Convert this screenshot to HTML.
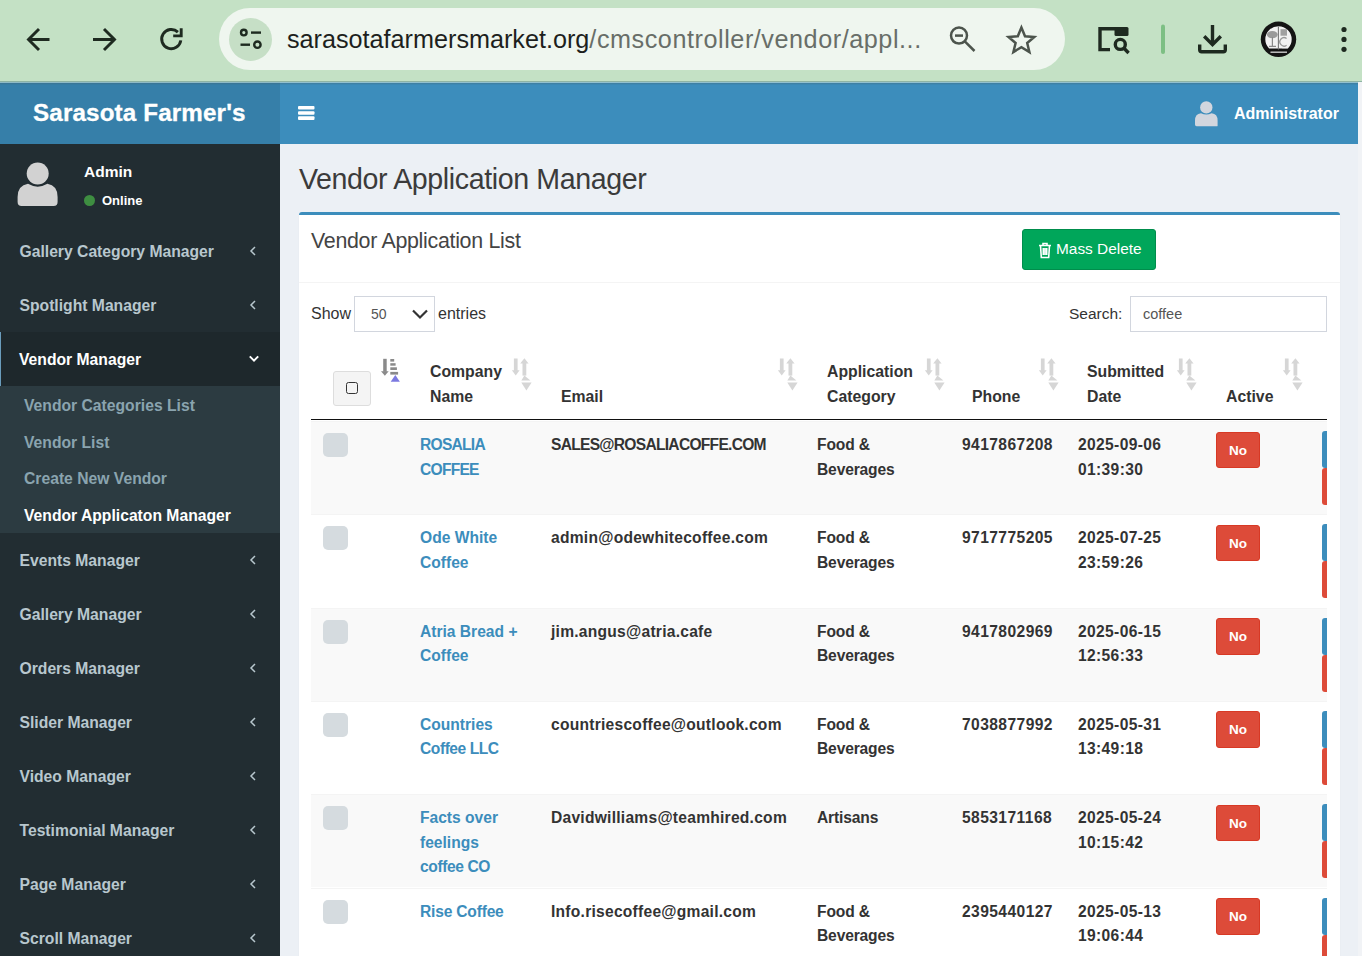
<!DOCTYPE html>
<html><head><meta charset="utf-8">
<style>
*{box-sizing:border-box;margin:0;padding:0}
html,body{width:1362px;height:956px;overflow:hidden;background:#ecf0f5;font-family:"Liberation Sans",sans-serif;color:#333}
div,svg{position:absolute}
#rsb{left:1358px;top:82px;width:4px;height:874px;background:#f1f3f6}
#chrome{left:0;top:0;width:1362px;height:82px;background:#c4e1c5;border-bottom:1px solid #8fb4a4}
#pill{left:219px;top:8px;width:846px;height:62px;border-radius:31px;background:#eff6ef}
#siteinfo{left:229px;top:18px;width:43px;height:43px;border-radius:50%;background:#c6dfc6}
#url{left:287px;top:21px;font-size:25.2px;line-height:36px;color:#1d1f1d;white-space:nowrap}
#url span{color:#686e68;letter-spacing:0.55px}
#header{left:0;top:82px;width:1358px;height:62px;background:#3c8dbc}
#logo{left:0;top:0;width:280px;height:62px;background:#367fa9;color:#fff;font-weight:700;font-size:24.2px;-webkit-text-stroke:0.3px #fff;letter-spacing:0.15px;line-height:62px;padding-left:33px;white-space:nowrap}
#admname{left:1234px;top:1px;height:62px;line-height:62px;color:#fff;font-weight:700;font-size:16px;white-space:nowrap}
#sidebar{left:0;top:144px;width:280px;height:812px;background:#222d32}
.mi{left:0;width:280px;height:54px;color:#b8c7ce;font-weight:700;font-size:15.7px;line-height:56.6px;padding-left:19.5px;white-space:nowrap}
.mi.active{background:#1e282c;color:#fff;border-left:1.5px solid #6a9cbc;padding-left:18px}
.mi svg{left:247px;top:21px}
.mi.active svg{left:245.5px}
.tv{left:0;top:242px;width:280px;height:147px;background:#2c3b41}
.si{left:24px;height:36.7px;line-height:39.5px;color:#8aa4af;font-weight:700;font-size:15.7px;white-space:nowrap}
.si.on{color:#fff}
#uname{left:84px;top:16.5px;font-size:15.5px;font-weight:700;color:#fff;line-height:22px}
#ustat{left:102px;top:47.5px;font-size:13px;font-weight:700;color:#fff;line-height:18px}
#udot{left:84px;top:51px;width:11px;height:11px;border-radius:50%;background:#3e8e41}
#h1{left:299px;top:157px;font-size:28.6px;letter-spacing:-0.4px;line-height:44px;color:#3b3b3b;white-space:nowrap}
#box{left:299px;top:212px;width:1041px;height:760px;background:#fff;border-top:3px solid #3c8dbc;border-radius:3px 3px 0 0;box-shadow:0 1px 1px rgba(0,0,0,.1)}
#boxline{left:299px;top:282px;width:1041px;height:1px;background:#f4f4f4}
#boxtitle{left:311px;top:226px;font-size:21.4px;letter-spacing:-0.3px;line-height:30px;color:#444;white-space:nowrap}
#massdel{left:1022px;top:229px;width:134px;height:41px;background:#00a65a;border:1px solid #008d4c;border-radius:3px;color:#fff;font-size:15.4px;line-height:38px;white-space:nowrap}
#massdel span{position:absolute;left:33px;top:0}
#massdel svg{left:15px;top:11.5px}
.ctl{font-size:16px;color:#333;white-space:nowrap;line-height:24px}
#sel{left:354px;top:296px;width:81px;height:36px;border:1px solid #d2d6de;background:#fff;font-size:14px;color:#555;line-height:34px;padding-left:16px}
#sel svg{left:56px;top:11px}
#search{left:1130px;top:296px;width:197px;height:36px;border:1px solid #d2d6de;background:#fff;font-size:14.5px;color:#555;line-height:34px;padding-left:12px}
.th{font-weight:700;font-size:15.8px;line-height:25px;padding-top:1.5px;color:#333;white-space:nowrap}
#thline{left:311px;top:419px;width:1016px;height:1px;background:#111}
#hcb{left:333px;top:371px;width:38px;height:35px;background:#f4f4f4;border:1px solid #ddd;border-radius:3px}
#hcb div{left:12px;top:10px;width:12px;height:12px;border:1.6px solid #333;border-radius:2.5px}
.row{left:311px;width:1016px;height:93.3px;overflow:hidden;border-top:1px solid #f4f4f4}
.row .c{top:11px;font-weight:700;font-size:15.6px;line-height:24.5px;color:#333;white-space:nowrap}
.cb{left:12px;top:11px;width:25px;height:24px;background:#d5dbdf;border-radius:5px}
.c.co{left:109px;color:#3c8dbc}
.c.em{left:240px;letter-spacing:0.25px}
.c.ca{left:506px;letter-spacing:-0.15px}
.c.ph{left:651px;letter-spacing:0.42px}
.c.dt{left:767px;letter-spacing:0.35px}
.no{left:905px;top:9.5px;width:44px;height:36.5px;background:#dd4b39;border:1px solid #d73925;border-radius:3px;color:#fff;font-weight:700;font-size:13.5px;line-height:35px;text-align:center}
.ab1{left:1011px;top:9px;width:20px;height:37px;background:#3c8dbc;border-radius:3px}
.ab2{left:1011px;top:46px;width:20px;height:37px;background:#dd4b39;border-radius:3px}
</style></head><body>
<div id="chrome">
  <div id="pill"></div>
  <div id="siteinfo"></div>
  <svg style="left:0;top:0" width="1362" height="82" viewBox="0 0 1362 82">
    <g fill="none" stroke="#1e2a20" stroke-width="2.6" stroke-linecap="butt" stroke-linejoin="miter">
      <path d="M49.5 39.5H29.5M39 29L28.5 39.5L39 50" stroke-width="2.9"/>
      <path d="M93 39.5H113M104 29L114.5 39.5L104 50" stroke-width="2.9"/>
      <path d="M180.8 40.4A9.6 9.6 0 1 1 177.9 32.1" stroke-width="2.9"/><path d="M173.2 35.9H181.2V28.2" stroke-width="2.9"/>
      <path d="M178.5 28.5V34H172.8" stroke-width="0"/>
    </g>
    
    <g fill="none" stroke="#1e2a20" stroke-width="2.4">
      <circle cx="243.8" cy="32.6" r="2.8"/>
      <path d="M251 32.6H261"/>
      <path d="M240.5 44.7H250"/>
      <circle cx="257.4" cy="44.7" r="3.2"/>
    </g>
    <g fill="none" stroke="#4c544c" stroke-width="2.5">
      <circle cx="959" cy="35.6" r="8"/>
      <path d="M955 35.6H963"/>
      <path d="M964.8 41.4L974.5 51"/>
      <path d="M1021.4 27.5L1025 36.2L1034.3 36.9L1027.2 43L1029.4 52L1021.4 47.1L1013.4 52L1015.6 43L1008.5 36.9L1017.8 36.2Z" stroke-linejoin="miter"/>
    </g>
    <g fill="none" stroke="#1e2a20" stroke-width="3.4">
      <path d="M1116 28.8H1100V49.6H1110"/>
      <circle cx="1120.3" cy="44.4" r="5"/>
      <path d="M1124 48.3L1128.6 53"/>
      <path d="M1212.5 25V44M1204.2 36.3L1212.5 44.6L1220.8 36.3"/>
      <path d="M1199.7 44.5V49.8Q1199.7 51.8 1201.7 51.8H1223.3Q1225.3 51.8 1225.3 49.8V44.5"/>
    </g>
    <rect x="1114.5" y="27.1" width="14" height="8.8" rx="1.5" fill="#1e2a20"/>
    <rect x="1161" y="24.4" width="4" height="29.7" rx="2" fill="#7dbf84"/>
    <circle cx="1278.5" cy="39.3" r="17.7" fill="#141414"/>
    <path d="M1269.1 48.6A13.2 13.2 0 1 1 1287.9 48.6Z" fill="#f2f2f2"/>
    <path d="M1278.4 26.5V49.5" stroke="#777" stroke-width="1.1"/>
    <ellipse cx="1272.3" cy="34.6" rx="5.4" ry="3.6" fill="#9a9a9a"/>
    <path d="M1272.4 37V46.2M1269 46.3H1276" stroke="#8a8a8a" stroke-width="1.2"/>
    <rect x="1280.5" y="29.2" width="6.5" height="6.5" fill="#a0a0a0"/>
    <path d="M1286.6 38.5A4.2 4.2 0 1 0 1286.6 45.2" fill="none" stroke="#999" stroke-width="1.3"/>
    <path d="M1282 48.5H1287.5" stroke="#999" stroke-width="1"/>
    <path d="M1270.5 52.2H1287" stroke="#ccc" stroke-width="1.4"/>
    <g fill="#1e2a20"><circle cx="1344" cy="29.5" r="2.6"/><circle cx="1344" cy="39.4" r="2.6"/><circle cx="1344" cy="49.3" r="2.6"/></g>
  </svg>
  <div id="url">sarasotafarmersmarket.org<span>/cmscontroller/vendor/appl...</span></div>
</div>
<div id="header">
  <div id="logo">Sarasota Farmer's</div>
  <svg style="left:297px;top:23px" width="18" height="16" viewBox="0 0 18 16"><g fill="#fff"><rect x="1" y="1" width="16.5" height="3.6" rx="1"/><rect x="1" y="6.2" width="16.5" height="3.6" rx="1"/><rect x="1" y="11.3" width="16.5" height="3.6" rx="1"/></g></svg>
  <svg style="left:1194px;top:18px" width="26" height="28" viewBox="0 0 26 28"><g fill="#d2d6de"><circle cx="12.3" cy="7.4" r="6.2"/><path d="M1 26V20.5Q1 13.8 7 13.2Q12.3 15.8 17.6 13.2Q23.6 13.8 23.6 20.5V26Q23.6 26.2 22 26.2H2.6Q1 26.2 1 24.6Z"/></g></svg>
  <div id="admname">Administrator</div>
</div>
<div id="rsb"></div>
<div style="left:0;top:82px;width:1358px;height:1px;background:rgba(215,235,222,0.55)"></div>
<div style="left:0;top:83px;width:1358px;height:1px;background:rgba(70,100,110,0.3)"></div>
<div style="left:0;top:84px;width:1358px;height:1px;background:rgba(70,100,110,0.1)"></div>
<div id="sidebar">
  <svg style="left:16px;top:18px" width="44" height="46" viewBox="0 0 44 46"><g fill="#d2d2d2"><circle cx="21.7" cy="11.5" r="11"/><path d="M1.6 44V35Q1.6 23.5 12 21.8Q21.7 27.5 31.4 21.8Q41.6 23.5 41.6 35V40Q41.6 44 37.6 44H5.6Q1.6 44 1.6 40Z"/></g></svg>
  <div id="uname">Admin</div>
  <div id="udot"></div>
  <div id="ustat">Online</div>
  <div class="mi" style="top:80px">Gallery Category Manager<svg width="12" height="12" viewBox="0 0 12 12"><path d="M8 2L4 6L8 10" fill="none" stroke="#b8c7ce" stroke-width="1.5"/></svg></div>
  <div class="mi" style="top:134px">Spotlight Manager<svg width="12" height="12" viewBox="0 0 12 12"><path d="M8 2L4 6L8 10" fill="none" stroke="#b8c7ce" stroke-width="1.5"/></svg></div>
  <div class="mi active" style="top:188px">Vendor Manager<svg width="14" height="12" viewBox="0 0 14 12"><path d="M2.8 3.4L7 7.6L11.2 3.4" fill="none" stroke="#fff" stroke-width="2"/></svg></div>
  <div class="tv">
    <div class="si" style="top:0">Vendor Categories List</div>
    <div class="si" style="top:36.7px">Vendor List</div>
    <div class="si" style="top:73.4px">Create New Vendor</div>
    <div class="si on" style="top:110.1px">Vendor Applicaton Manager</div>
  </div>
  <div class="mi" style="top:389px">Events Manager<svg width="12" height="12" viewBox="0 0 12 12"><path d="M8 2L4 6L8 10" fill="none" stroke="#b8c7ce" stroke-width="1.5"/></svg></div>
  <div class="mi" style="top:443px">Gallery Manager<svg width="12" height="12" viewBox="0 0 12 12"><path d="M8 2L4 6L8 10" fill="none" stroke="#b8c7ce" stroke-width="1.5"/></svg></div>
  <div class="mi" style="top:497px">Orders Manager<svg width="12" height="12" viewBox="0 0 12 12"><path d="M8 2L4 6L8 10" fill="none" stroke="#b8c7ce" stroke-width="1.5"/></svg></div>
  <div class="mi" style="top:551px">Slider Manager<svg width="12" height="12" viewBox="0 0 12 12"><path d="M8 2L4 6L8 10" fill="none" stroke="#b8c7ce" stroke-width="1.5"/></svg></div>
  <div class="mi" style="top:605px">Video Manager<svg width="12" height="12" viewBox="0 0 12 12"><path d="M8 2L4 6L8 10" fill="none" stroke="#b8c7ce" stroke-width="1.5"/></svg></div>
  <div class="mi" style="top:659px">Testimonial Manager<svg width="12" height="12" viewBox="0 0 12 12"><path d="M8 2L4 6L8 10" fill="none" stroke="#b8c7ce" stroke-width="1.5"/></svg></div>
  <div class="mi" style="top:713px">Page Manager<svg width="12" height="12" viewBox="0 0 12 12"><path d="M8 2L4 6L8 10" fill="none" stroke="#b8c7ce" stroke-width="1.5"/></svg></div>
  <div class="mi" style="top:767px">Scroll Manager<svg width="12" height="12" viewBox="0 0 12 12"><path d="M8 2L4 6L8 10" fill="none" stroke="#b8c7ce" stroke-width="1.5"/></svg></div>
</div>
<div id="h1">Vendor Application Manager</div>
<div id="box"></div>
<div id="boxline"></div>
<div id="boxtitle">Vendor Application List</div>
<div id="massdel"><svg width="14" height="17" viewBox="0 0 14 17"><g fill="none" stroke="#fff" stroke-width="1.6"><path d="M1 3.5H13M5 3.5V1.5H9V3.5M2.5 3.5L3.3 15.5H10.7L11.5 3.5M5.3 6V13M7 6V13M8.7 6V13"/></g></svg><span>Mass Delete</span></div>
<div class="ctl" style="left:311px;top:302px">Show</div>
<div id="sel">50<svg width="18" height="12" viewBox="0 0 18 12"><path d="M2 2.5L9 9.5L16 2.5" fill="none" stroke="#333" stroke-width="2.2"/></svg></div>
<div class="ctl" style="left:438px;top:302px">entries</div>
<div class="ctl" style="left:1069px;top:302px;font-size:15.5px">Search:</div>
<div id="search">coffee</div>
<div id="hcb"><div></div></div>
<svg style="left:509.9px;top:357px" width="22" height="35" viewBox="0 0 22 35"><g fill="#d6d6d6"><rect x="3.9" y="1.5" width="3.7" height="12.5"/><path d="M1.9 13.2H9.6L5.75 18.6Z"/><path d="M10.2 6.6H18.6L14.4 1.2Z"/><rect x="12.5" y="6" width="3.8" height="12.6"/><path d="M14.4 18.4L20.4 23.6H11.3Z"/><path d="M11.3 25.6H21.6L16.4 33.4Z"/></g></svg>
<svg style="left:775.5px;top:357px" width="22" height="35" viewBox="0 0 22 35"><g fill="#d6d6d6"><rect x="3.9" y="1.5" width="3.7" height="12.5"/><path d="M1.9 13.2H9.6L5.75 18.6Z"/><path d="M10.2 6.6H18.6L14.4 1.2Z"/><rect x="12.5" y="6" width="3.8" height="12.6"/><path d="M14.4 18.4L20.4 23.6H11.3Z"/><path d="M11.3 25.6H21.6L16.4 33.4Z"/></g></svg>
<svg style="left:922.5px;top:357px" width="22" height="35" viewBox="0 0 22 35"><g fill="#d6d6d6"><rect x="3.9" y="1.5" width="3.7" height="12.5"/><path d="M1.9 13.2H9.6L5.75 18.6Z"/><path d="M10.2 6.6H18.6L14.4 1.2Z"/><rect x="12.5" y="6" width="3.8" height="12.6"/><path d="M14.4 18.4L20.4 23.6H11.3Z"/><path d="M11.3 25.6H21.6L16.4 33.4Z"/></g></svg>
<svg style="left:1036.5px;top:357px" width="22" height="35" viewBox="0 0 22 35"><g fill="#d6d6d6"><rect x="3.9" y="1.5" width="3.7" height="12.5"/><path d="M1.9 13.2H9.6L5.75 18.6Z"/><path d="M10.2 6.6H18.6L14.4 1.2Z"/><rect x="12.5" y="6" width="3.8" height="12.6"/><path d="M14.4 18.4L20.4 23.6H11.3Z"/><path d="M11.3 25.6H21.6L16.4 33.4Z"/></g></svg>
<svg style="left:1174.5px;top:357px" width="22" height="35" viewBox="0 0 22 35"><g fill="#d6d6d6"><rect x="3.9" y="1.5" width="3.7" height="12.5"/><path d="M1.9 13.2H9.6L5.75 18.6Z"/><path d="M10.2 6.6H18.6L14.4 1.2Z"/><rect x="12.5" y="6" width="3.8" height="12.6"/><path d="M14.4 18.4L20.4 23.6H11.3Z"/><path d="M11.3 25.6H21.6L16.4 33.4Z"/></g></svg>
<svg style="left:1281.1px;top:357px" width="22" height="35" viewBox="0 0 22 35"><g fill="#d6d6d6"><rect x="3.9" y="1.5" width="3.7" height="12.5"/><path d="M1.9 13.2H9.6L5.75 18.6Z"/><path d="M10.2 6.6H18.6L14.4 1.2Z"/><rect x="12.5" y="6" width="3.8" height="12.6"/><path d="M14.4 18.4L20.4 23.6H11.3Z"/><path d="M11.3 25.6H21.6L16.4 33.4Z"/></g></svg>
<svg style="left:375px;top:352px" width="30" height="34" viewBox="0 0 30 34"><g fill="#8a8a8a"><rect x="8.2" y="6.8" width="3.5" height="13"/><path d="M6 19.2H13.7L9.85 23.8Z"/><rect x="15.3" y="7" width="3.9" height="2.6"/><rect x="15.3" y="11.2" width="5.3" height="2.5"/><rect x="15.3" y="15.3" width="6.6" height="2.7"/><rect x="15.3" y="19.9" width="7.8" height="2.7"/></g><path d="M20.3 23.1L24.9 29.7H15.7Z" fill="#7b79e0"/></svg>
<div class="th" style="left:430px;top:357px">Company<br>Name</div>
<div class="th" style="left:561px;top:382px">Email</div>
<div class="th" style="left:827px;top:357px">Application<br>Category</div>
<div class="th" style="left:972px;top:382px">Phone</div>
<div class="th" style="left:1087px;top:357px">Submitted<br>Date</div>
<div class="th" style="left:1226px;top:382px">Active</div>
<div id="thline"></div>
<div class="row" style="top:421.0px;background:#f9f9f9">
<div class="cb"></div>
<div class="c co" style="letter-spacing:-0.75px">ROSALIA<br>COFFEE</div>
<div class="c em" style="letter-spacing:-0.73px">SALES@ROSALIACOFFE.COM</div>
<div class="c ca">Food &amp;<br>Beverages</div>
<div class="c ph">9417867208</div>
<div class="c dt">2025-09-06<br>01:39:30</div>
<div class="no">No</div><div class="ab1"></div><div class="ab2"></div>
</div>
<div class="row" style="top:514.3px;background:#fff">
<div class="cb"></div>
<div class="c co">Ode White<br>Coffee</div>
<div class="c em">admin@odewhitecoffee.com</div>
<div class="c ca">Food &amp;<br>Beverages</div>
<div class="c ph">9717775205</div>
<div class="c dt">2025-07-25<br>23:59:26</div>
<div class="no">No</div><div class="ab1"></div><div class="ab2"></div>
</div>
<div class="row" style="top:607.6px;background:#f9f9f9">
<div class="cb"></div>
<div class="c co">Atria Bread +<br>Coffee</div>
<div class="c em">jim.angus@atria.cafe</div>
<div class="c ca">Food &amp;<br>Beverages</div>
<div class="c ph">9417802969</div>
<div class="c dt">2025-06-15<br>12:56:33</div>
<div class="no">No</div><div class="ab1"></div><div class="ab2"></div>
</div>
<div class="row" style="top:700.9px;background:#fff">
<div class="cb"></div>
<div class="c co">Countries<br><span style="letter-spacing:-0.45px">Coffee LLC</span></div>
<div class="c em">countriescoffee@outlook.com</div>
<div class="c ca">Food &amp;<br>Beverages</div>
<div class="c ph">7038877992</div>
<div class="c dt">2025-05-31<br>13:49:18</div>
<div class="no">No</div><div class="ab1"></div><div class="ab2"></div>
</div>
<div class="row" style="top:794.2px;background:#f9f9f9">
<div class="cb"></div>
<div class="c co">Facts over<br>feelings<br><span style="letter-spacing:-0.4px">coffee CO</span></div>
<div class="c em">Davidwilliams@teamhired.com</div>
<div class="c ca">Artisans</div>
<div class="c ph">5853171168</div>
<div class="c dt">2025-05-24<br>10:15:42</div>
<div class="no">No</div><div class="ab1"></div><div class="ab2"></div>
</div>
<div class="row" style="top:887.5px;background:#fff">
<div class="cb"></div>
<div class="c co" style="letter-spacing:-0.2px">Rise Coffee</div>
<div class="c em">Info.risecoffee@gmail.com</div>
<div class="c ca">Food &amp;<br>Beverages</div>
<div class="c ph">2395440127</div>
<div class="c dt">2025-05-13<br>19:06:44</div>
<div class="no">No</div><div class="ab1"></div><div class="ab2"></div>
</div>
</body></html>
